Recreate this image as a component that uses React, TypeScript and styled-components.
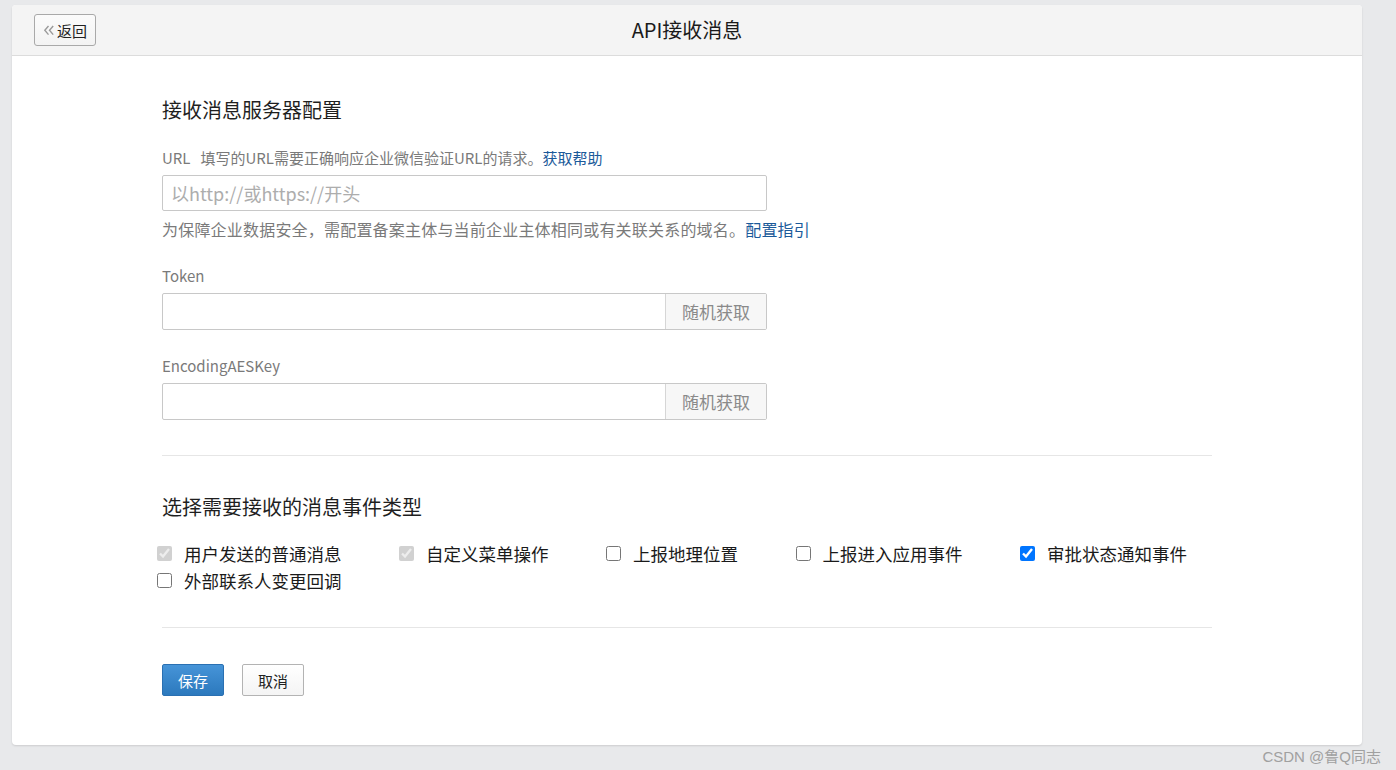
import React, { useState } from "react";
import styled, { createGlobalStyle } from "styled-components";

const GlobalStyle = createGlobalStyle`
  html, body {
    margin: 0;
    padding: 0;
    background: #e8e9eb;
    font-family: "Microsoft YaHei", "Noto Sans CJK SC", sans-serif;
  }
  #root {
    min-height: 770px;
    position: relative;
  }
`;

interface EventType {
  label: string;
  checked: boolean;
  disabled?: boolean;
}

const initialEvents: EventType[] = [
  { label: "用户发送的普通消息", checked: true, disabled: true },
  { label: "自定义菜单操作", checked: true, disabled: true },
  { label: "上报地理位置", checked: false },
  { label: "上报进入应用事件", checked: false },
  { label: "审批状态通知事件", checked: true },
  { label: "外部联系人变更回调", checked: false },
];

function App() {
  const [events, setEvents] = useState<EventType[]>(initialEvents);

  const toggle = (i: number) => {
    setEvents((prev) =>
      prev.map((e, idx) => (idx === i && !e.disabled ? { ...e, checked: !e.checked } : e))
    );
  };

  return (
    <>
      <GlobalStyle />
      <Card>
        <Header>
          <BackButton>
            <svg width="12" height="12" viewBox="0 0 12 12">
              <path d="M5.5 2 L1.8 6.3 L5.5 10.6" fill="none" stroke="#9a9a9a" strokeWidth="1.4" />
              <path d="M10.2 2 L6.5 6.3 L10.2 10.6" fill="none" stroke="#9a9a9a" strokeWidth="1.4" />
            </svg>
            返回
          </BackButton>
          <HeaderTitle>API接收消息</HeaderTitle>
          <span />
        </Header>

        <Content>
          <SectionTitle>接收消息服务器配置</SectionTitle>

          <FieldLabel $top={24}>
            URL<Gap />填写的URL需要正确响应企业微信验证URL的请求。<Link>获取帮助</Link>
          </FieldLabel>
          <InputBox $height={36}>
            <TextInput placeholder="以http://或https://开头" />
          </InputBox>
          <HelpText>
            为保障企业数据安全，需配置备案主体与当前企业主体相同或有关联关系的域名。<Link>配置指引</Link>
          </HelpText>

          <FieldLabel $top={26}>Token</FieldLabel>
          <InputBox $height={37}>
            <TextInput />
            <RandomButton>随机获取</RandomButton>
          </InputBox>

          <FieldLabel $top={26}>EncodingAESKey</FieldLabel>
          <InputBox $height={37}>
            <TextInput />
            <RandomButton>随机获取</RandomButton>
          </InputBox>

          <Divider $top={35} />

          <SectionTitle $top={37}>选择需要接收的消息事件类型</SectionTitle>

          <CheckGroup>
            {events.map((e, i) => (
              <CheckItem key={e.label}>
                <CheckBox
                  type="checkbox"
                  checked={e.checked}
                  disabled={e.disabled}
                  onChange={() => toggle(i)}
                />
                {e.label}
              </CheckItem>
            ))}
          </CheckGroup>

          <Divider $top={33} />

          <Actions>
            <PrimaryButton>保存</PrimaryButton>
            <DefaultButton>取消</DefaultButton>
          </Actions>
        </Content>
      </Card>
      <Watermark>CSDN @鲁Q同志</Watermark>
    </>
  );
}

export default App;

const Card = styled.div`
  margin: 5px 0 0 12px;
  width: 1350px;
  background: #fff;
  border-radius: 4px;
  box-shadow: 0 1px 2px rgba(0, 0, 0, 0.12);
  overflow: hidden;
`;

const Header = styled.div`
  height: 50px;
  background: #f4f4f4;
  border-bottom: 1px solid #dcdcdc;
  display: grid;
  grid-template-columns: 1fr auto 1fr;
  align-items: center;
  padding: 0 22px;
`;

const BackButton = styled.button`
  justify-self: start;
  width: 62px;
  height: 32px;
  display: flex;
  align-items: center;
  justify-content: center;
  gap: 2px;
  padding: 0;
  background: linear-gradient(#fbfbfb, #f3f3f3);
  border: 1px solid #a9a9a9;
  border-radius: 3px;
  font-family: inherit;
  font-size: 15px;
  color: #222;
  cursor: pointer;
`;

const HeaderTitle = styled.div`
  font-size: 20px;
  color: #1a1a1a;
  line-height: 28px;
`;

const Content = styled.div`
  padding: 40px 150px 49px;
  display: flex;
  flex-direction: column;
  align-items: flex-start;
`;

const SectionTitle = styled.div<{ $top?: number }>`
  margin-top: ${(p) => p.$top ?? 0}px;
  font-size: 20px;
  line-height: 28px;
  color: #1f1f1f;
`;

const FieldLabel = styled.div<{ $top: number }>`
  margin-top: ${(p) => p.$top}px;
  font-size: 15px;
  line-height: 20px;
  color: #7a7a7a;
`;

const Gap = styled.span`
  display: inline-block;
  width: 10px;
`;

const Link = styled.a`
  color: #1b5a9a;
  cursor: pointer;
`;

const HelpText = styled.div`
  margin-top: 7px;
  font-size: 16px;
  line-height: 22px;
  letter-spacing: 0.2px;
  color: #7a7a7a;
`;

const InputBox = styled.div<{ $height: number }>`
  margin-top: 7px;
  width: 605px;
  height: ${(p) => p.$height}px;
  box-sizing: border-box;
  border: 1px solid #c8c8c8;
  border-radius: 2px;
  display: flex;
  overflow: hidden;
  background: #fff;
`;

const TextInput = styled.input`
  flex: 1;
  min-width: 0;
  border: none;
  outline: none;
  padding: 0 8px;
  font-family: inherit;
  font-size: 18px;
  color: #333;
  background: transparent;

  &::placeholder {
    color: #adadad;
  }
`;

const RandomButton = styled.button`
  width: 101px;
  border: none;
  border-left: 1px solid #d6d6d6;
  background: #f7f7f7;
  font-family: inherit;
  font-size: 17px;
  color: #8a8a8a;
  cursor: pointer;
`;

const Divider = styled.div<{ $top: number }>`
  margin-top: ${(p) => p.$top}px;
  width: 1050px;
  height: 1px;
  background: #e6e6e6;
`;

const CheckGroup = styled.div`
  margin-top: 19px;
  margin-left: -5px;
  width: 1055px;
  display: flex;
  flex-wrap: wrap;
  column-gap: 57.5px;
`;

const CheckItem = styled.label`
  display: flex;
  align-items: center;
  height: 27px;
  font-size: 17.5px;
  color: #1a1a1a;
  cursor: pointer;
`;

const CheckBox = styled.input`
  width: 15px;
  height: 15px;
  margin: 0 12px 0 0;
`;

const Actions = styled.div`
  margin-top: 36px;
  display: flex;
  gap: 18px;
`;

const BaseButton = styled.button`
  width: 62px;
  height: 32px;
  border-radius: 2px;
  font-family: inherit;
  font-size: 15px;
  cursor: pointer;
`;

const PrimaryButton = styled(BaseButton)`
  background: linear-gradient(#4694d8, #2c79bd);
  border: 1px solid #2a70b2;
  color: #fff;
`;

const DefaultButton = styled(BaseButton)`
  background: linear-gradient(#ffffff, #f4f4f4);
  border: 1px solid #b3b3b3;
  color: #222;
`;

const Watermark = styled.div`
  position: absolute;
  right: 15px;
  top: 742px;
  font-size: 15px;
  line-height: 20px;
  color: #a0a0a0;
  font-family: "Liberation Sans", "Noto Sans CJK SC", sans-serif;
`;
